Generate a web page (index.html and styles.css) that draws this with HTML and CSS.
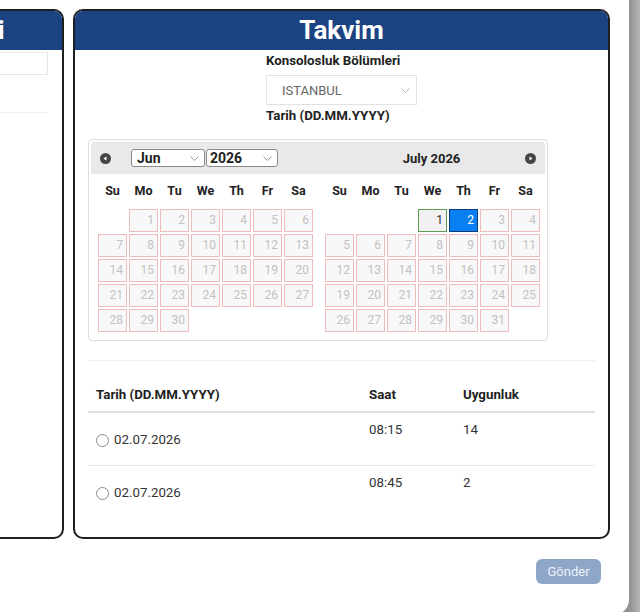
FILE: index.html
```html
<!DOCTYPE html>
<html lang="tr">

<head>
    <meta charset="utf-8">
    <title>Randevu Takvimi</title>
    <link rel="stylesheet" href="styles.css">
</head>

<body>
    <div class="modal">
        <div class="panels">
            <div class="panel panel-side">
                <div class="panel-title">Randevu Bilgileri</div>
                <div class="side-body">
                    <div class="side-input"></div>
                    <div class="side-rule"></div>
                </div>
            </div>

            <div class="panel panel-main">
                <div class="panel-title">Takvim</div>
                <div class="panel-body">
                    <div class="consulate">
                        <label class="field-label" for="consulate">Konsolosluk Bölümleri</label>
                        <div class="select-wrap">
                            <select id="consulate" class="consulate-select">
                                <option>ISTANBUL</option>
                            </select>
                            <svg class="chevron" width="9" height="5" viewBox="0 0 9 5">
                                <path d="M0.5 0.5 4.5 4.5 8.5 0.5" fill="none" stroke="#b5b5b5" stroke-width="1" />
                            </svg>
                        </div>
                        <div class="field-label">Tarih (DD.MM.YYYY)</div>
                    </div>

                    <div class="datepicker">
                        <div class="dp-group dp-group-first">
                            <div class="dp-header">
                                <span class="dp-nav">
                                    <svg width="11" height="11" viewBox="0 0 11 11">
                                        <circle cx="5.5" cy="5.5" r="5.5" fill="#454545" />
                                        <path d="M3.5 5.5 6.5 3.5v4z" fill="#fff" />
                                    </svg>
                                </span>
                                <span class="dp-select dp-month">
                                    <span>Jun</span>
                                    <svg width="9" height="5" viewBox="0 0 9 5">
                                        <path d="M0.5 0.5 4.5 4.5 8.5 0.5" fill="none" stroke="#999" stroke-width="1" />
                                    </svg>
                                </span>
                                <span class="dp-select dp-year">
                                    <span>2026</span>
                                    <svg width="9" height="5" viewBox="0 0 9 5">
                                        <path d="M0.5 0.5 4.5 4.5 8.5 0.5" fill="none" stroke="#999" stroke-width="1" />
                                    </svg>
                                </span>
                            </div>
                            <table class="dp-calendar">
                                <thead>
                                    <tr><th>Su</th><th>Mo</th><th>Tu</th><th>We</th><th>Th</th><th>Fr</th><th>Sa</th></tr>
                                </thead>
                                <tbody>
                                    <tr><td></td><td><span class="day">1</span></td><td><span class="day">2</span></td><td><span class="day">3</span></td><td><span class="day">4</span></td><td><span class="day">5</span></td><td><span class="day">6</span></td></tr>
                                    <tr><td><span class="day">7</span></td><td><span class="day">8</span></td><td><span class="day">9</span></td><td><span class="day">10</span></td><td><span class="day">11</span></td><td><span class="day">12</span></td><td><span class="day">13</span></td></tr>
                                    <tr><td><span class="day">14</span></td><td><span class="day">15</span></td><td><span class="day">16</span></td><td><span class="day">17</span></td><td><span class="day">18</span></td><td><span class="day">19</span></td><td><span class="day">20</span></td></tr>
                                    <tr><td><span class="day">21</span></td><td><span class="day">22</span></td><td><span class="day">23</span></td><td><span class="day">24</span></td><td><span class="day">25</span></td><td><span class="day">26</span></td><td><span class="day">27</span></td></tr>
                                    <tr><td><span class="day">28</span></td><td><span class="day">29</span></td><td><span class="day">30</span></td><td></td><td></td><td></td><td></td></tr>
                                </tbody>
                            </table>
                        </div>

                        <div class="dp-group dp-group-last">
                            <div class="dp-header">
                                <span class="dp-title">July 2026</span>
                                <span class="dp-nav">
                                    <svg width="11" height="11" viewBox="0 0 11 11">
                                        <circle cx="5.5" cy="5.5" r="5.5" fill="#454545" />
                                        <path d="M7.5 5.5 4.5 3.5v4z" fill="#fff" />
                                    </svg>
                                </span>
                            </div>
                            <table class="dp-calendar">
                                <thead>
                                    <tr><th>Su</th><th>Mo</th><th>Tu</th><th>We</th><th>Th</th><th>Fr</th><th>Sa</th></tr>
                                </thead>
                                <tbody>
                                    <tr><td></td><td></td><td></td><td><span class="day day-today">1</span></td><td><span class="day day-active">2</span></td><td><span class="day">3</span></td><td><span class="day">4</span></td></tr>
                                    <tr><td><span class="day">5</span></td><td><span class="day">6</span></td><td><span class="day">7</span></td><td><span class="day">8</span></td><td><span class="day">9</span></td><td><span class="day">10</span></td><td><span class="day">11</span></td></tr>
                                    <tr><td><span class="day">12</span></td><td><span class="day">13</span></td><td><span class="day">14</span></td><td><span class="day">15</span></td><td><span class="day">16</span></td><td><span class="day">17</span></td><td><span class="day">18</span></td></tr>
                                    <tr><td><span class="day">19</span></td><td><span class="day">20</span></td><td><span class="day">21</span></td><td><span class="day">22</span></td><td><span class="day">23</span></td><td><span class="day">24</span></td><td><span class="day">25</span></td></tr>
                                    <tr><td><span class="day">26</span></td><td><span class="day">27</span></td><td><span class="day">28</span></td><td><span class="day">29</span></td><td><span class="day">30</span></td><td><span class="day">31</span></td><td></td></tr>
                                </tbody>
                            </table>
                        </div>
                    </div>

                    <div class="divider"></div>

                    <table class="slots">
                        <thead>
                            <tr>
                                <th class="col-date">Tarih (DD.MM.YYYY)</th>
                                <th class="col-time">Saat</th>
                                <th>Uygunluk</th>
                            </tr>
                        </thead>
                        <tbody>
                            <tr>
                                <td>
                                    <label class="slot-pick">
                                        <input type="radio" name="slot" value="0815">
                                        <span>02.07.2026</span>
                                    </label>
                                </td>
                                <td>08:15</td>
                                <td>14</td>
                            </tr>
                            <tr>
                                <td>
                                    <label class="slot-pick">
                                        <input type="radio" name="slot" value="0845">
                                        <span>02.07.2026</span>
                                    </label>
                                </td>
                                <td>08:45</td>
                                <td>2</td>
                            </tr>
                        </tbody>
                    </table>
                </div>
            </div>
        </div>

        <div class="actions">
            <button class="send-btn" disabled>Gönder</button>
        </div>
    </div>
</body>

</html>
```

FILE: styles.css
```css
* {
    box-sizing: border-box;
}

body {
    margin: 0;
    height: 612px;
    overflow: hidden;
    font-family: Roboto, 'Liberation Sans', sans-serif;
    color: #222;
    background: linear-gradient(to right, #8f8f8f 629px, #b6b6b6 100%);
}

.modal {
    width: 629px;
    height: 614px;
    background: #fff;
    border-bottom-right-radius: 14px;
    overflow: hidden;
}

.panels {
    display: flex;
    gap: 9px;
    padding-top: 9px;
    margin-left: -252px;
}

.panel {
    flex: none;
    height: 530px;
    border: 2px solid #1f1f1f;
    border-radius: 10px;
    overflow: hidden;
    background: #fff;
}

.panel-side {
    width: 316px;
}

.panel-main {
    width: 537px;
}

.panel-title {
    background: #1b4382;
    color: #fff;
    font-size: 26px;
    font-weight: 700;
    line-height: 39px;
    text-align: center;
    white-space: nowrap;
}

.side-body {
    padding: 2px 14px 0;
}

.side-input {
    height: 23px;
    border: 1px solid #e6e6e6;
}

.side-rule {
    margin-top: 37px;
    height: 1px;
    background: #eee;
}

.panel-body {
    padding: 0 13px;
}

.consulate {
    width: 151px;
    margin: 0 auto;
    padding-top: 3px;
}

.field-label {
    display: block;
    font-size: 13.3px;
    font-weight: 700;
    line-height: 16px;
    color: #222;
    white-space: nowrap;
}

.select-wrap {
    position: relative;
    margin: 6px 0 3px;
}

.consulate-select {
    appearance: none;
    display: block;
    width: 100%;
    height: 30px;
    margin: 0;
    padding: 0 0 0 15px;
    border: 1px solid #e2e2e2;
    border-radius: 0;
    background: #fff;
    font-family: Roboto, 'Liberation Sans', sans-serif;
    font-size: 13px;
    color: #666;
}

.select-wrap .chevron {
    position: absolute;
    right: 7px;
    top: 13px;
    pointer-events: none;
}

/* datepicker */
.datepicker {
    display: flex;
    width: 460px;
    margin-top: 15px;
    padding: 2px;
    border: 1px solid #ddd;
    border-radius: 4px;
}

.dp-group {
    width: 50%;
}

.dp-header {
    display: flex;
    align-items: center;
    height: 32px;
    padding: 0 9px;
    background: #e9e9e9;
}

.dp-group-first .dp-header {
    border-top-left-radius: 3px;
}

.dp-group-last .dp-header {
    border-top-right-radius: 3px;
}

.dp-nav {
    display: flex;
    width: 11px;
    height: 11px;
}

.dp-select {
    display: flex;
    align-items: center;
    justify-content: space-between;
    height: 18px;
    padding: 0 5px;
    border: 1px solid #8a8a8a;
    border-radius: 3px;
    background: #fff;
    font-size: 14px;
    font-weight: 700;
    color: #222;
}

.dp-month {
    width: 74px;
    margin-left: 20px;
}

.dp-year {
    width: 72px;
    margin-left: 1px;
    padding-left: 3px;
}

.dp-title {
    flex: 1;
    padding-left: 11px;
    text-align: center;
    font-size: 13px;
    font-weight: 700;
    color: #222;
}

.dp-calendar {
    width: 217px;
    margin: 2px 0 5px 6px;
    border-collapse: collapse;
    table-layout: fixed;
}

.dp-calendar th {
    padding: 7px 0 9px;
    font-size: 12.5px;
    font-weight: 700;
    line-height: 16px;
    text-align: center;
    color: #222;
}

.dp-calendar td {
    padding: 1px;
}

.day {
    display: block;
    padding: 3px 3px;
    border: 1px solid #efbcbc;
    background: #f8f8f8;
    color: #c2c2c2;
    font-size: 12px;
    line-height: 15px;
    text-align: right;
}

.day-today {
    border-color: #5e9a50;
    background: #f1f1f1;
    color: #333;
}

.day-active {
    border-color: #0c3c7c;
    background: #0a7ff1;
    color: #fff;
}

.divider {
    margin-top: 19px;
    height: 1px;
    background: #eee;
}

/* available slots */
.slots {
    width: 100%;
    margin-top: 18px;
    border-collapse: collapse;
}

.slots th {
    padding: 8px;
    border-bottom: 2px solid #dedede;
    font-size: 13.3px;
    font-weight: 700;
    line-height: 16px;
    text-align: left;
    color: #222;
}

.slots .col-date {
    width: 273px;
}

.slots .col-time {
    width: 94px;
}

.slots td {
    padding: 9px 8px 17px;
    border-bottom: 1px solid #e8e8e8;
    vertical-align: top;
    font-size: 13.3px;
    line-height: 16px;
    color: #333;
}

.slots tr:last-child td {
    border-bottom: none;
}

.slot-pick {
    display: flex;
    align-items: center;
    gap: 5px;
    margin-top: 10px;
}

.slot-pick input {
    appearance: none;
    width: 13px;
    height: 13px;
    margin: 0;
    border: 1px solid #8a8a8a;
    border-radius: 50%;
    background: #fff;
}

.actions {
    display: flex;
    justify-content: flex-end;
    padding: 20px 28px 0 0;
}

.send-btn {
    width: 65px;
    height: 25px;
    border: none;
    border-radius: 6px;
    background: #8ea7c9;
    color: #eef2f8;
    font-family: Roboto, 'Liberation Sans', sans-serif;
    font-size: 13px;
}
```
